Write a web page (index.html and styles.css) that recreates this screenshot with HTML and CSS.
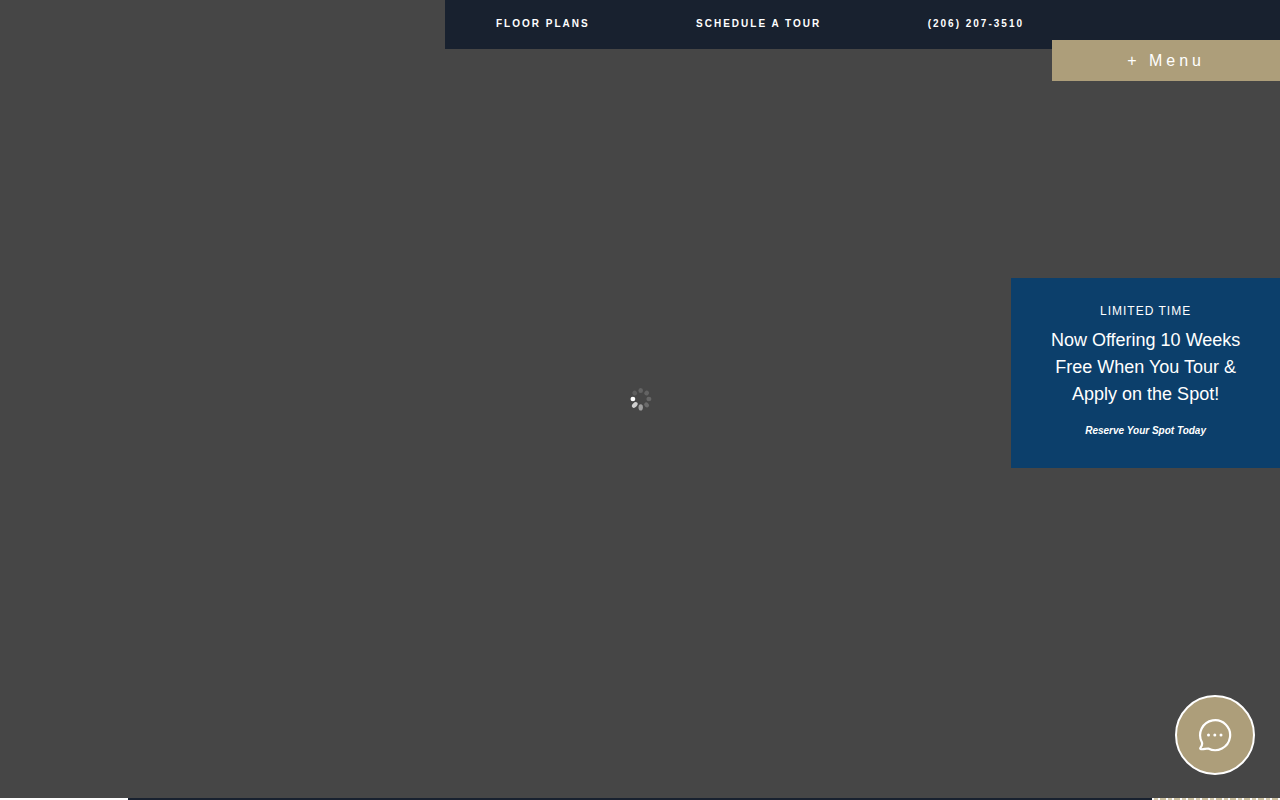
FILE: index.html
```
<!DOCTYPE html>
<html lang="en">
<head>
  <meta charset="UTF-8">
  <meta name="viewport" content="width=device-width, initial-scale=1">
  <title>Floor Plans and Tours</title>
  <link rel="stylesheet" href="styles.css">
</head>
<body>

  <header class="header">
    <nav class="top-nav">
      <a href="#floor-plans">Floor Plans</a>
      <a href="#tour">Schedule a Tour</a>
      <a href="tel:2062073510">(206) 207-3510</a>
    </nav>
    <button class="menu-toggle" type="button">+ Menu</button>
  </header>

  <main class="hero">
    <svg class="loader" viewBox="0 0 24 24" aria-hidden="true">
      <g fill="#fff" transform="translate(.7 0)">
        <ellipse cx="12" cy="3.6" rx="2.3" ry="2.5" opacity=".16"/>
        <ellipse cx="12" cy="3.6" rx="2.3" ry="2.5" opacity=".16" transform="rotate(45 12 12)"/>
        <ellipse cx="12" cy="3.8" rx="2.3" ry="2.5" opacity=".18" transform="rotate(90 12 12)"/>
        <ellipse cx="12" cy="3.6" rx="2.2" ry="2.7" opacity=".2" transform="rotate(135 12 12)"/>
        <ellipse cx="12" cy="3.6" rx="2.2" ry="3.1" opacity=".48" transform="rotate(180 12 12)"/>
        <ellipse cx="12" cy="3.6" rx="2.2" ry="3.3" opacity=".75" transform="rotate(225 12 12)"/>
        <ellipse cx="12" cy="4.2" rx="2.2" ry="2.4" transform="rotate(270 12 12)"/>
        <ellipse cx="12" cy="3.6" rx="2.3" ry="2.5" opacity=".13" transform="rotate(315 12 12)"/>
      </g>
    </svg>
  </main>

  <section class="intro">
    <div class="intro-side"></div>
    <div class="intro-main"></div>
    <div class="intro-pattern"></div>
  </section>

  <aside class="offer">
    <p class="offer-label">Limited Time</p>
    <p class="offer-text">Now Offering 10 Weeks Free When You Tour &amp; Apply on the Spot!</p>
    <a class="offer-link" href="#reserve">Reserve Your Spot Today</a>
  </aside>

  <button class="chat" type="button" aria-label="Chat">
    <svg viewBox="0 0 34 34" aria-hidden="true">
      <path d="M3.900 24.200A15 15 0 1 1 10.300 30.500C7.800 30.400 5.500 31.600 3 31.200C2 31 2 30.300 2.500 29.700C4.100 27.800 4.500 26 3.900 24.200Z" fill="none" stroke="#fff" stroke-width="2.200" stroke-linejoin="round"/>
      <g fill="#fff">
        <circle cx="10.500" cy="17" r="1.500"/>
        <circle cx="16.800" cy="17" r="1.500"/>
        <circle cx="23" cy="17" r="1.500"/>
      </g>
    </svg>
  </button>

</body>
</html>
```
FILE: styles.css
```
* {
  box-sizing: border-box;
}
body {
  margin: 0;
  font-family: "Liberation Sans", Arial, sans-serif;
  color: #fff;
  background: #fff;
  overflow-x: hidden;
}
a {
  color: #fff;
  text-decoration: none;
}
button {
  font-family: inherit;
  color: #fff;
  cursor: pointer;
}

/* top bar */
.header {
  position: fixed;
  top: 0;
  right: 0;
  z-index: 10;
}
.top-nav {
  display: flex;
  gap: 4px;
  padding: 15px 16vw 16px 0;
  background: #18212f;
}
.top-nav a {
  padding: 0 4vw;
  font-size: 10px;
  font-weight: bold;
  line-height: 18px;
  letter-spacing: 2px;
  text-transform: uppercase;
  white-space: nowrap;
}
.menu-toggle {
  position: absolute;
  top: 40px;
  right: 0;
  padding: 10px 75px;
  border: 0;
  font-size: 16px;
  line-height: 21px;
  letter-spacing: 4px;
  white-space: nowrap;
  background: #ad9e7a;
}

.hero {
  display: flex;
  align-items: center;
  justify-content: center;
  height: calc(100vh - 2px);
  background: #464646;
}
.loader {
  width: 24px;
  height: 24px;
}

.intro {
  display: flex;
  height: 2px;
}
.intro-side {
  width: 10%;
}
.intro-main {
  flex: 1;
  background: #18212f;
}
.intro-pattern {
  width: 10%;
  background: repeating-linear-gradient(90deg, #fff 0 2px, #d3c8ac 2px 6px, #fff 6px 8px, #c9bd9d 8px 14px);
}

/* side promo */
.offer {
  position: fixed;
  top: 278px;
  right: 0;
  width: 21vw;
  min-width: 260px;
  padding: 24px 32px 28px;
  text-align: center;
  background: #0c3f6b;
}
.offer-label {
  margin: 0 0 7px;
  font-size: 12px;
  line-height: 18px;
  letter-spacing: 1px;
  text-transform: uppercase;
}
.offer-text {
  margin: 0 0 14px;
  font-size: 18px;
  line-height: 27px;
}
.offer-link {
  display: block;
  font-size: 10px;
  font-weight: bold;
  font-style: italic;
  line-height: 18px;
}

.chat {
  position: fixed;
  right: 25px;
  bottom: 25px;
  display: flex;
  align-items: center;
  justify-content: center;
  width: 80px;
  height: 80px;
  padding: 0;
  border: 2px solid #fff;
  border-radius: 50%;
  background: #ad9e7a;
}
.chat svg {
  width: 34px;
  height: 34px;
}
```
